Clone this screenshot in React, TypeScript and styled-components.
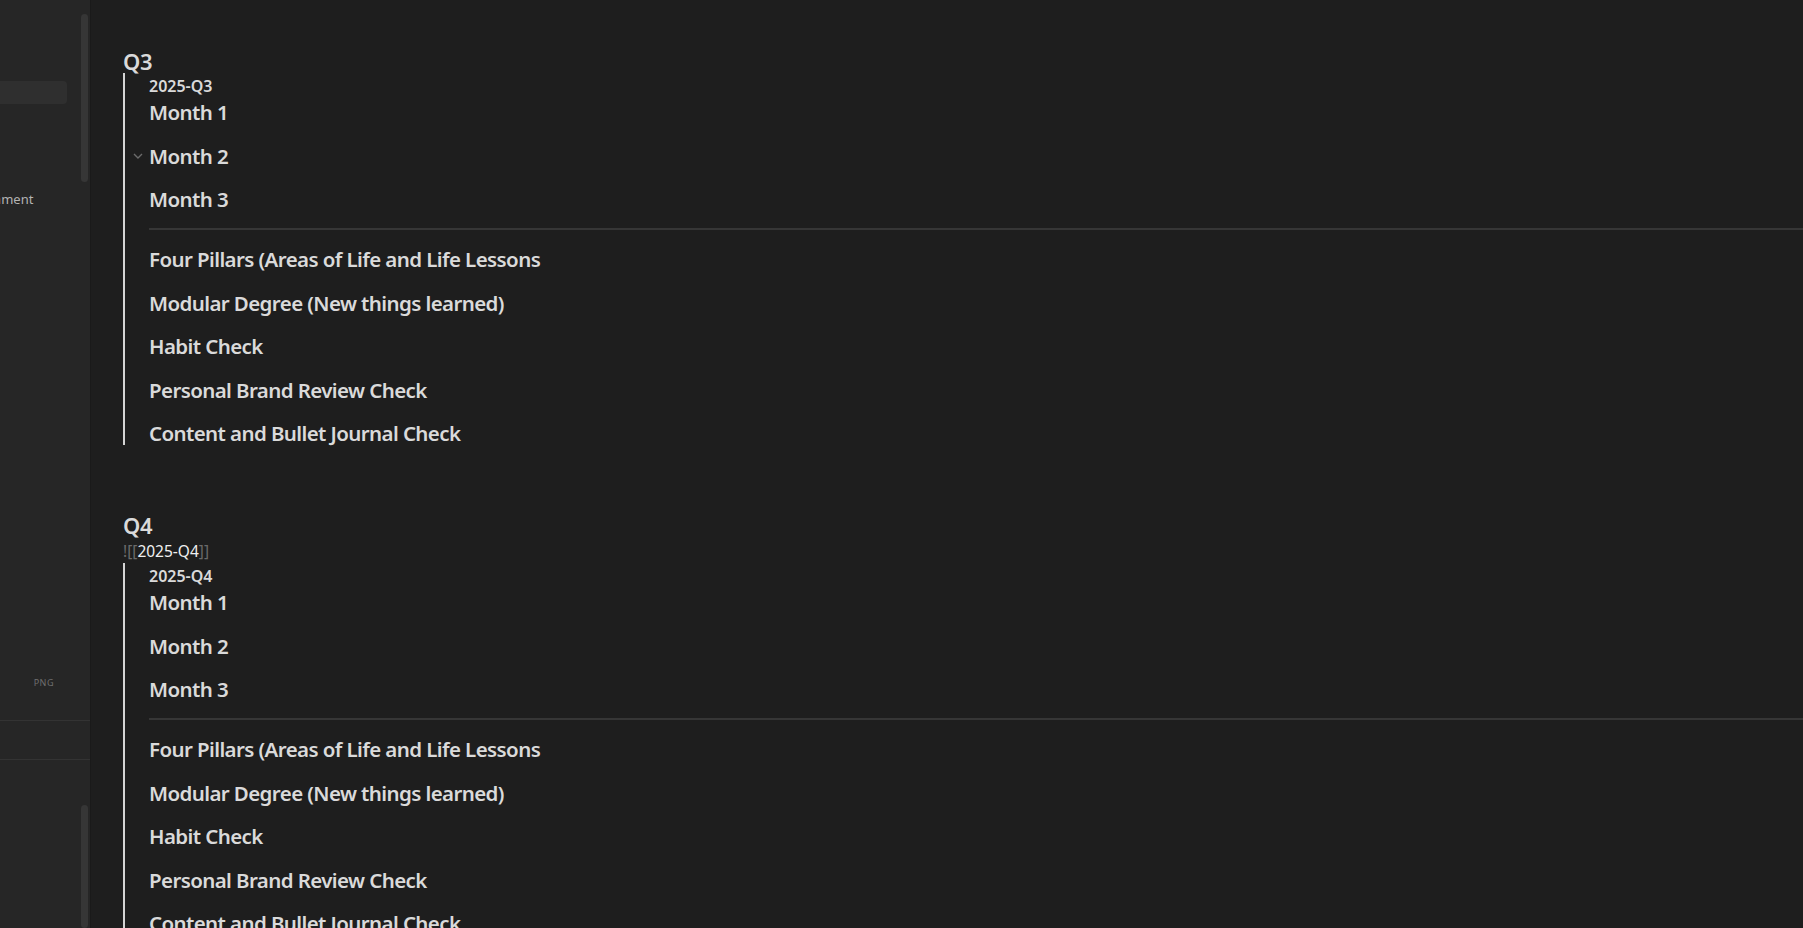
import React from 'react'
import styled, { createGlobalStyle } from 'styled-components'

const GlobalStyle = createGlobalStyle`
  html, body {
    margin: 0;
    padding: 0;
    background: #1e1e1e;
    height: 100%;
    overflow: hidden;
  }
  #root {
    height: 100%;
  }
  * {
    box-sizing: border-box;
  }
`

const Page = styled.div`
  display: flex;
  height: 928px;
  width: 1803px;
  font-family: "Noto Sans", "Open Sans", sans-serif;
  color: #dadada;
`

const Sidebar = styled.aside`
  width: 91px;
  flex-shrink: 0;
  background: #262626;
  border-right: 1px solid #1a1a1a;
  display: flex;
  flex-direction: column;
  overflow: hidden;
`

const Panel = styled.div<{ $grow?: boolean }>`
  display: flex;
  flex: ${p => (p.$grow ? '1' : 'none')};
  height: ${p => (p.$grow ? 'auto' : '168px')};
  min-height: 0;
`

const FileList = styled.div<{ $top?: number }>`
  flex: 1;
  display: flex;
  flex-direction: column;
  padding-top: ${p => p.$top ?? 0}px;
  min-width: 0;
`

const ActiveRow = styled.div`
  height: 23px;
  margin-right: 14px;
  border-radius: 0 4px 4px 0;
  background: #2f2f2f;
`

const FileName = styled.div`
  margin-top: 86px;
  margin-left: -39px;
  font-size: 13px;
  line-height: 18px;
  color: #b3b3b3;
  white-space: nowrap;
`

const FileTag = styled.div`
  margin-top: auto;
  margin-bottom: 31px;
  align-self: flex-end;
  margin-right: 27px;
  font-size: 9px;
  letter-spacing: 0.5px;
  color: #6f6f6f;
`

const ScrollTrack = styled.div<{ $top: number }>`
  width: 7px;
  margin-right: 2px;
  flex-shrink: 0;
  display: flex;
  flex-direction: column;
  padding-top: ${p => p.$top}px;
`

const ScrollThumb = styled.div<{ $height?: number }>`
  width: 7px;
  height: ${p => (p.$height ? `${p.$height}px` : 'auto')};
  flex: ${p => (p.$height ? 'none' : '1')};
  border-radius: 4px;
  background: #363636;
`

const Divider = styled.div`
  height: 40px;
  border-top: 1px solid #333;
  border-bottom: 1px solid #333;
  flex-shrink: 0;
`

const Main = styled.main`
  flex: 1;
  overflow: hidden;
  padding: 49px 0 0 32px;
`

const Section = styled.section<{ $gap?: number }>`
  margin-bottom: ${p => p.$gap ?? 0}px;
`

const QuarterHeading = styled.h2`
  margin: 0;
  font-size: 22px;
  line-height: 24px;
  font-weight: 600;
  letter-spacing: -0.2px;
  color: #dadada;
`

const SourceLink = styled.div`
  margin-top: 2px;
  font-size: 15.5px;
  line-height: 24px;
  color: #f0f0f0;
`

const Bracket = styled.span`
  color: #6a6a6a;
`

const Embed = styled.div`
  border-left: 2px solid #d4d4d4;
  padding: 4px 0 0 24px;
`

const EmbedTitle = styled.div`
  font-size: 16px;
  line-height: 19px;
  font-weight: 600;
  color: #dadada;
  margin-bottom: 4px;
`

const HeadingList = styled.div<{ $gap: number }>`
  display: flex;
  flex-direction: column;
  gap: ${p => p.$gap}px;
`

const Heading = styled.h4`
  position: relative;
  margin: 0;
  font-size: 20.5px;
  letter-spacing: -0.6px;
  line-height: 24px;
  font-weight: 600;
  color: #dadada;
`

const Fold = styled.svg`
  position: absolute;
  left: -16px;
  top: 9px;
  width: 10px;
  height: 6px;
`

const Rule = styled.hr`
  margin: 17px 0 17px;
  border: none;
  height: 2px;
  background: #363636;
`

const months = ['Month 1', 'Month 2', 'Month 3']
const checks = [
  'Four Pillars (Areas of Life and Life Lessons',
  'Modular Degree (New things learned)',
  'Habit Check',
  'Personal Brand Review Check',
  'Content and Bullet Journal Check',
]

const QuarterEmbed = ({ title, folded }: { title: string; folded?: string }) => (
  <Embed>
    <EmbedTitle>{title}</EmbedTitle>
    <HeadingList $gap={19.6}>
      {months.map(m => (
        <Heading key={m}>
          {folded === m && (
            <Fold viewBox="0 0 10 6">
              <polyline points="1,1 5,5 9,1" fill="none" stroke="#6b6b6b" strokeWidth="1.4" />
            </Fold>
          )}
          {m}
        </Heading>
      ))}
    </HeadingList>
    <Rule />
    <HeadingList $gap={19.5}>
      {checks.map(c => (
        <Heading key={c}>{c}</Heading>
      ))}
    </HeadingList>
  </Embed>
)

const App = () => {
  return (
    <>
      <GlobalStyle />
      <Page>
        <Sidebar>
          <Panel $grow>
            <FileList $top={81}>
              <ActiveRow />
              <FileName>Assignment</FileName>
              <FileTag>PNG</FileTag>
            </FileList>
            <ScrollTrack $top={14}>
              <ScrollThumb $height={168} />
            </ScrollTrack>
          </Panel>
          <Divider />
          <Panel>
            <FileList />
            <ScrollTrack $top={45}>
              <ScrollThumb />
            </ScrollTrack>
          </Panel>
        </Sidebar>
        <Main>
          <Section $gap={68}>
            <QuarterHeading>Q3</QuarterHeading>
            <QuarterEmbed title="2025-Q3" folded="Month 2" />
          </Section>
          <Section>
            <QuarterHeading>Q4</QuarterHeading>
            <SourceLink>
              <Bracket>![[</Bracket>2025-Q4<Bracket>]]</Bracket>
            </SourceLink>
            <QuarterEmbed title="2025-Q4" />
          </Section>
        </Main>
      </Page>
    </>
  )
}

export default App
